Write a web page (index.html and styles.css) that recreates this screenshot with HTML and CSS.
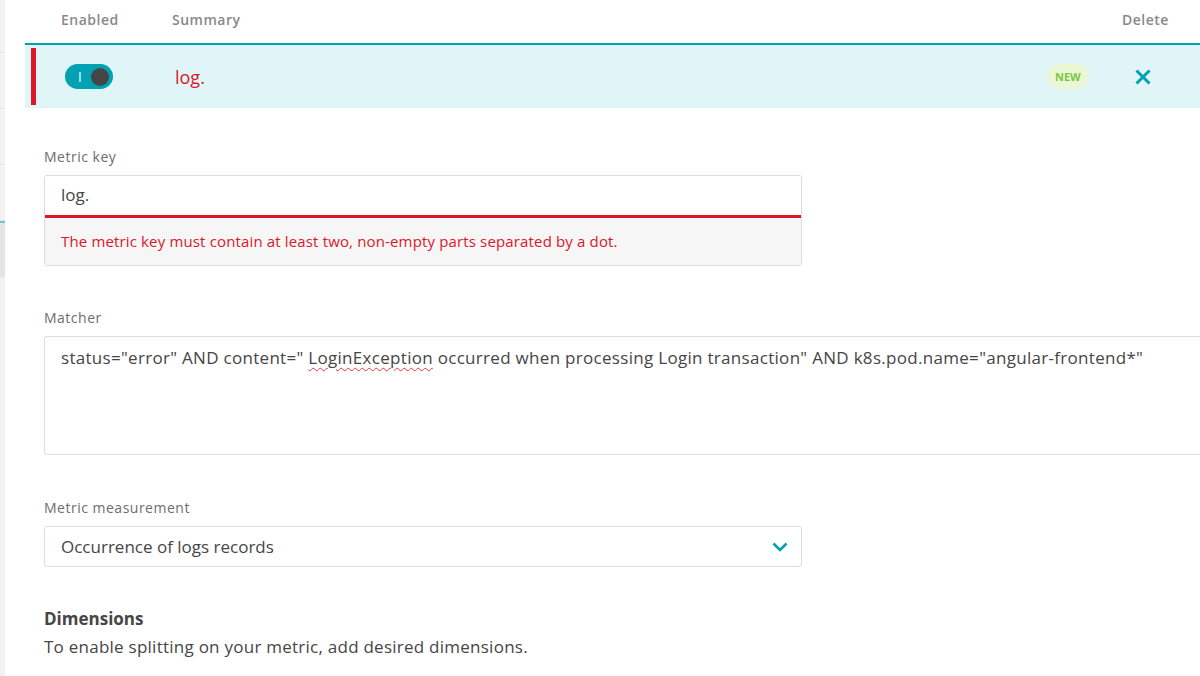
FILE: index.html
```html
<!DOCTYPE html>
<html>
<head>
<meta charset="utf-8">
<link rel="stylesheet" href="styles.css">
</head>
<body>
<div class="page">
  <aside class="rail">
    <div class="rail-item"></div>
    <div class="rail-item"></div>
    <div class="rail-item"></div>
    <div class="rail-item"></div>
    <div class="rail-item active"></div>
  </aside>
  <main class="main">
    <div class="thead">
      <div class="th th-enabled">Enabled</div>
      <div class="th th-summary">Summary</div>
      <div class="th th-delete">Delete</div>
    </div>
    <div class="row">
      <div class="row-marker"></div>
      <div class="cell-toggle">
        <span class="toggle"><span class="toggle-bar"></span><span class="toggle-knob"></span></span>
      </div>
      <div class="cell-summary">log.</div>
      <div class="cell-badge"><span class="badge">NEW</span></div>
      <div class="cell-delete">
        <svg width="18" height="18" viewBox="0 0 18 18"><path d="M2.5 2.5 L15.5 15.5 M15.5 2.5 L2.5 15.5" stroke="#00a1b2" stroke-width="3" fill="none"/></svg>
      </div>
    </div>
    <div class="form">
      <div class="field">
        <label class="label">Metric key</label>
        <div class="input-group error">
          <div class="input">log.</div>
          <div class="error-msg">The metric key must contain at least two, non-empty parts separated by a dot.</div>
        </div>
      </div>
      <div class="field field-matcher">
        <label class="label">Matcher</label>
        <div class="textarea">status="error" AND content=" <span class="spell">LoginException</span> occurred when processing Login transaction" AND k8s.pod.name="angular-frontend*"</div>
      </div>
      <div class="field field-measure">
        <label class="label">Metric measurement</label>
        <div class="select">
          <span>Occurrence of logs records</span>
          <svg width="16" height="10" viewBox="0 0 16 10"><path d="M1.5 1.5 L8 8 L14.5 1.5" stroke="#00a1b2" stroke-width="2.6" fill="none"/></svg>
        </div>
      </div>
      <div class="section">
        <h3 class="section-title">Dimensions</h3>
        <p class="section-desc">To enable splitting on your metric, add desired dimensions.</p>
      </div>
    </div>
  </main>
</div>
</body>
</html>
```
FILE: styles.css
```css
* { box-sizing: border-box; }
html, body { margin: 0; padding: 0; }
body {
  font-family: "Open Sans", "Liberation Sans", sans-serif;
  color: #454646;
  background: #fff;
  width: 1200px;
  height: 676px;
  overflow: hidden;
}
.page { display: flex; height: 676px; }
.rail {
  width: 5px;
  flex: none;
  background: #f2f2f2;
  display: flex;
  flex-direction: column;
}
.rail-item { height: 56px; border-bottom: 1px solid #e6e6e6; }
.rail-item:first-child { height: 53px; }
.rail-item.active {
  height: 56px;
  background: #e4e4e4;
  border-top: 2px solid #6fc8d2;
  border-bottom: none;
}
.main { flex: 1; min-width: 0; overflow: hidden; padding-left: 20px; }
.thead {
  display: flex;
  height: 45px;
  align-items: center;
  font-size: 14px;
  font-weight: 600;
  letter-spacing: 0.5px;
  color: #898989;
  border-bottom: 2px solid #00a1b2;
  padding-bottom: 5px;
}
.th-enabled { width: 147px; padding-left: 36px; }
.th-summary { flex: 1; }
.th-delete { width: 78px; }
.row {
  display: flex;
  align-items: center;
  height: 63px;
  background: #e0f5f8;
}
.row-marker {
  width: 5px;
  height: 57px;
  background: #dc172a;
  margin-left: 6px;
  flex: none;
}
.cell-toggle { width: 139px; padding-left: 29px; display: flex; }
.toggle {
  width: 48px;
  height: 25px;
  border-radius: 13px;
  background: #00a1b2;
  display: flex;
  align-items: center;
  justify-content: space-between;
  padding: 0 4px 0 14px;
}
.toggle-bar { width: 2px; height: 10px; background: #9fdbe2; }
.toggle-knob { width: 18px; height: 18px; border-radius: 50%; background: #454646; }
.cell-summary { flex: 1; color: #dc172a; font-size: 18px; }
.cell-badge { width: 81px; }
.badge {
  display: inline-block;
  background: #e9f7d4;
  color: #7dc540;
  font-size: 11px;
  font-weight: 700;
  padding: 5px 8px;
  border-radius: 13px;
  line-height: 15px;
}
.cell-delete { width: 72px; display: flex; padding-left: 6px; }
.form { padding: 39px 0 0 19px; }
.field { display: flex; flex-direction: column; }
.label {
  font-size: 14px;
  letter-spacing: 0.5px;
  color: #6d6d6d;
  line-height: 20px;
  margin-bottom: 8px;
}
.input-group {
  width: 758px;
  border: 1px solid #dcdcdc;
  border-radius: 3px;
  overflow: hidden;
}
.input {
  height: 42px;
  padding: 0 16px;
  font-size: 17px;
  line-height: 38px;
  background: #fff;
  border-bottom: 3px solid #dc172a;
}
.error-msg {
  background: #f6f6f6;
  color: #dc172a;
  font-size: 15px;
  letter-spacing: 0.15px;
  padding: 13px 16px 14px;
  line-height: 20px;
}
.field-matcher { margin-top: 42px; }
.textarea {
  width: 1170px;
  height: 119px;
  border: 1px solid #dcdcdc;
  border-radius: 3px;
  padding: 9px 16px;
  font-size: 17px;
  letter-spacing: 0.3px;
  line-height: 24px;
  white-space: nowrap;
}
.spell { text-decoration: underline wavy #e8343f; text-decoration-thickness: 1px; text-underline-offset: 3px; }
.field-measure { margin-top: 43px; }
.select {
  width: 758px;
  height: 41px;
  border: 1px solid #dcdcdc;
  border-radius: 3px;
  display: flex;
  align-items: center;
  justify-content: space-between;
  padding: 0 13px 0 16px;
  font-size: 17px;
}
.section { margin-top: 41px; }
.section-title { margin: 0; font-size: 17px; font-weight: 700; line-height: 22px; color: #454646; }
.section-desc { margin: 6px 0 0; font-size: 17px; letter-spacing: 0.25px; line-height: 22px; }
```
